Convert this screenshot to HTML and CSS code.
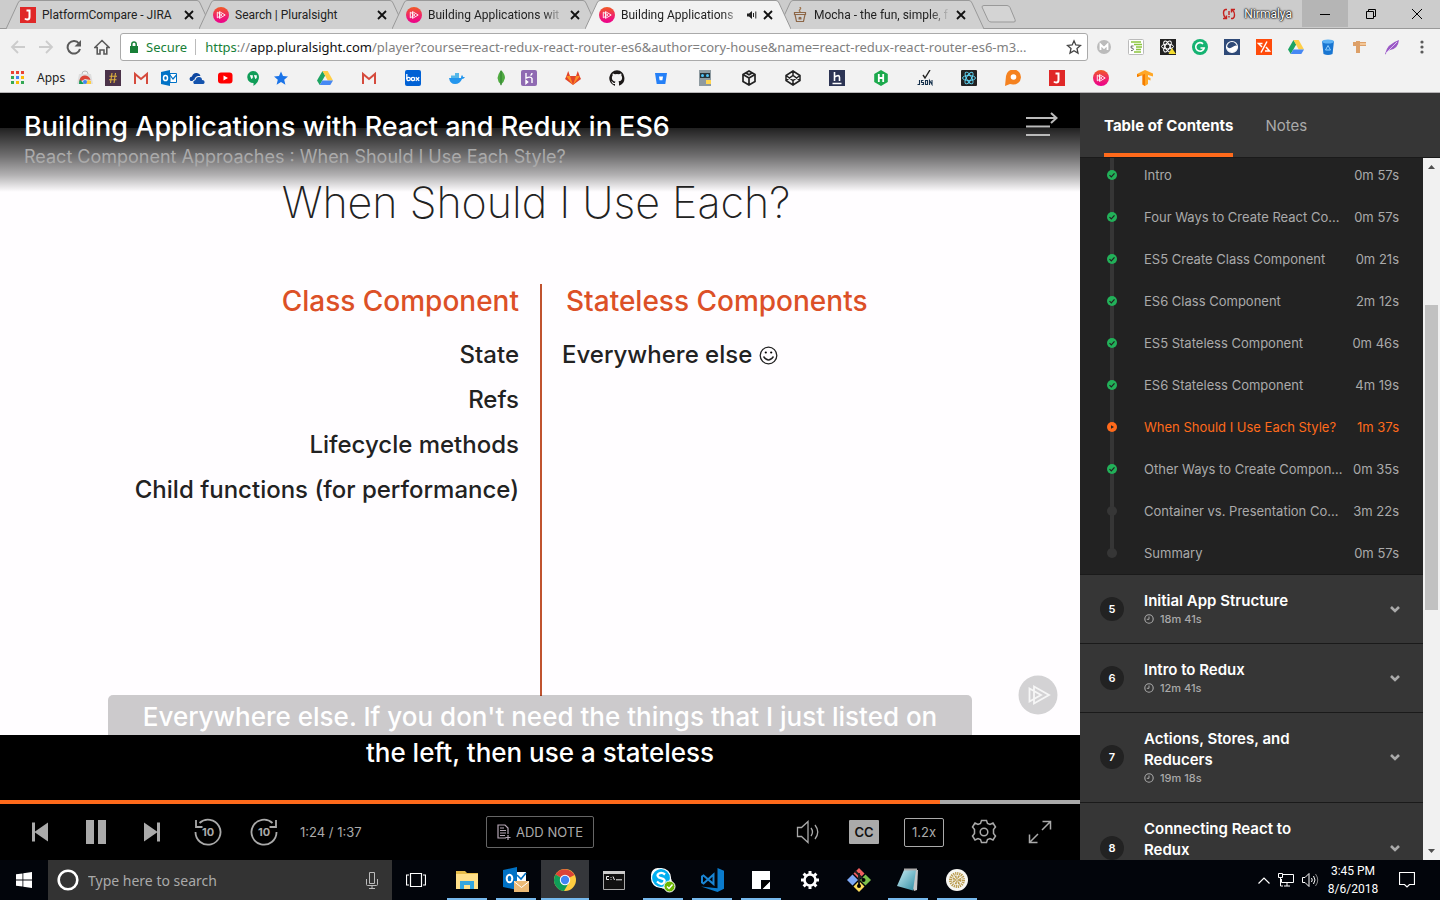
FILE: index.html
```html
<!DOCTYPE html>
<html lang="en">
<head>
<meta charset="utf-8">
<title>Building Applications with React and Redux in ES6</title>
<link rel="stylesheet" href="styles.css">
</head>
<body>
<svg class="defs" aria-hidden="true">
  <defs>
    <linearGradient id="pinkGrad" x1="0" y1="0" x2="0" y2="1"><stop offset="0" stop-color="#f15a24"/><stop offset=".55" stop-color="#f0246a"/><stop offset="1" stop-color="#ec008c"/></linearGradient>
    <linearGradient id="noteGrad" x1="0" y1="0" x2="1" y2="1"><stop offset="0" stop-color="#c9eef5"/><stop offset="1" stop-color="#2f8ca3"/></linearGradient>
  </defs>
  <symbol id="ps" viewBox="0 0 16 16"><circle cx="8" cy="8" r="8" fill="url(#pinkGrad)"/><path d="M6.5 4.6 12.2 8 6.500 11.400zM4.300 5.200 9 8l-4.700 2.800z" fill="none" stroke="#fff" stroke-width=".9"/></symbol>
  <symbol id="jira" viewBox="0 0 16 16"><path fill="#e02828" d="M0 0h16v16H0z"/><path d="M6.500 3.500h4M9.500 3.500v6.500q0 2.500-2.300 2.500-1.500 0-2.200-1" fill="none" stroke="#fff" stroke-width="2"/></symbol>
  <symbol id="x" viewBox="0 0 10 10"><path d="M1 1l8 8M9 1 1 9" stroke="#111" stroke-width="1.800"/></symbol>
  <symbol id="tabshape" viewBox="0 0 206 29" preserveAspectRatio="none"><path d="M0 29 12 3Q13 .5 15 .5H191Q193 .5 194 3L206 29" stroke="#999"/></symbol>
  <symbol id="gmail" viewBox="0 0 16 16"><path fill="#f3f3f3" d="M1 3h14v11H1z"/><path d="M2 14V4l6 5 6-5v10" fill="none" stroke="#d54b3d" stroke-width="2"/></symbol>
  <symbol id="drive" viewBox="0 0 16 16"><path fill="#1da462" d="M5.500 1 0 10.500 2.700 15 8.200 5.600z"/><path fill="#ffcf48" d="M5.500 1h5.200L16 10.500h-5.300z"/><path fill="#4688f4" d="M5.400 10.500H16L13.300 15H2.700z"/></symbol>
  <symbol id="check" viewBox="0 0 10 10"><circle cx="5" cy="5" r="5" fill="#22b159"/><path d="M2.500 5.200 4.300 7l3.200-3.600" fill="none" stroke="#222" stroke-width="1.200"/></symbol>
  <symbol id="playdot" viewBox="0 0 10 10"><circle cx="5" cy="5" r="5" fill="#ff6a1b"/><path d="M4 3.200 7 5 4 6.800z" fill="#222"/></symbol>
  <symbol id="todo" viewBox="0 0 10 10"><circle cx="5" cy="5" r="5" fill="#363636"/></symbol>
  <symbol id="clock" viewBox="0 0 10 10"><circle cx="5" cy="5" r="4.200" fill="none" stroke="#aaa" stroke-width="1.100"/><path d="M5 2.500V5.300H2.800" fill="none" stroke="#aaa"/></symbol>
  <symbol id="chev" viewBox="0 0 10 8"><path d="M1 2l4 4 4-4" fill="none" stroke="#aaa" stroke-width="2.600"/></symbol>
  <symbol id="outlook" viewBox="0 0 16 16"><path fill="#0072c6" d="M0 2 9 0v16l-9-2z"/><path fill="#fff" stroke="#0072c6" d="M9 3.500h6.500v9H9z"/><path d="M9 5l3 4 3.500-4" fill="none" stroke="#0072c6" stroke-width="1.200"/><ellipse cx="4.500" cy="8" rx="2" ry="2.600" fill="none" stroke="#fff" stroke-width="1.500"/></symbol>
</svg>

<header class="browser">
  <nav class="tabs" aria-label="Browser tabs">
    <a class="tab" href="#"><svg class="shape"><use href="#tabshape"/></svg><svg class="i16"><use href="#jira"/></svg><span class="label">PlatformCompare - JIRA</span><button aria-label="Close"><svg class="i10"><use href="#x"/></svg></button></a>
    <a class="tab" href="#"><svg class="shape"><use href="#tabshape"/></svg><svg class="i16"><use href="#ps"/></svg><span class="label">Search | Pluralsight</span><button aria-label="Close"><svg class="i10"><use href="#x"/></svg></button></a>
    <a class="tab" href="#"><svg class="shape"><use href="#tabshape"/></svg><svg class="i16"><use href="#ps"/></svg><span class="label fade">Building Applications wit</span><button aria-label="Close"><svg class="i10"><use href="#x"/></svg></button></a>
    <a class="tab active" href="#"><svg class="shape"><use href="#tabshape"/></svg><svg class="i16"><use href="#ps"/></svg><span class="label fade">Building Applications</span><svg class="i10" viewBox="0 0 10 10"><path d="M0 3.500h2L5 1v8L2 6.500H0z" fill="#222"/><path d="M6.500 3v4M8.800 1.500v7" stroke="#222"/></svg><button aria-label="Close"><svg class="i10"><use href="#x"/></svg></button></a>
    <a class="tab" href="#"><svg class="shape"><use href="#tabshape"/></svg><svg class="i16" viewBox="0 0 16 16"><path d="M3 7.500h10l-1.500 7h-7zM2.500 5.500h11v2h-11z" fill="none" stroke="#8d6748" stroke-width="1.200"/><path d="M6.500 12.500v-2q1.500-1.500 3 0v2z" fill="#8d6748"/><path d="M7.500 0q2 1 .5 2.500T8.500 5" fill="none" stroke="#a0764f" stroke-width="1.300"/></svg><span class="label fade">Mocha - the fun, simple, f</span><button aria-label="Close"><svg class="i10"><use href="#x"/></svg></button></a>
    <button class="newtab" aria-label="New tab"><svg width="36" height="18" viewBox="0 0 36 18"><path d="M1 2Q1 .5 3 .5h23q2 0 3 2l5 12q1 2.500-1 2.500H10q-2 0-3-2z" fill="#d4d4d4" stroke="#999"/></svg></button>
    <div class="window">
      <svg width="14" height="12" viewBox="0 0 14 12"><path d="M5 1.500H3.500Q1.500 2 1.500 5t2 5M9 10.500h1.500q2-.5 2-3.500t-2-5M1 10.500h3.500v-3M13 1.500H9.500v3" fill="none" stroke="#c5221f" stroke-width="1.400"/><path d="M7 3v4M7 8v1.500" stroke="#c5221f" stroke-width="1.400"/></svg>
      <span class="user">Nirmalya</span>
      <button class="min" aria-label="Minimize"><svg class="i10" viewBox="0 0 10 10"><path d="M0 5.500h10" stroke="#000"/></svg></button>
      <button aria-label="Restore"><svg class="i10" viewBox="0 0 10 10"><path d="M.5 2.500h7v7h-7zM2.500 2.500v-2h7v7h-2" fill="none" stroke="#000"/></svg></button>
      <button aria-label="Close window"><svg class="i10" viewBox="0 0 10 10"><path d="M0 0l10 10M10 0 0 10" stroke="#000"/></svg></button>
    </div>
  </nav>

  <div class="toolbar">
    <button aria-label="Back"><svg class="i16" viewBox="0 0 16 16"><path d="M15 8H2M8 2 2 8l6 6" fill="none" stroke="#ccc" stroke-width="1.800"/></svg></button>
    <button aria-label="Forward"><svg class="i16" viewBox="0 0 16 16"><path d="M1 8h13M8 2l6 6-6 6" fill="none" stroke="#ccc" stroke-width="1.800"/></svg></button>
    <button aria-label="Reload"><svg class="i16" viewBox="0 0 16 16"><path d="M13 4.500A6.300 6.300 0 1 0 14 10" fill="none" stroke="#5a5a5a" stroke-width="2"/><path d="M15 1v6.500H8.500z" fill="#5a5a5a"/></svg></button>
    <button aria-label="Home"><svg class="i16" viewBox="0 0 16 16"><path d="M.8 8.500 8 1.500l7.200 7h-2.400V15H10v-4H6v4H3.200V8.500z" fill="none" stroke="#5a5a5a" stroke-width="1.600"/></svg></button>
    <div class="omnibox">
      <svg width="8" height="12" viewBox="0 0 8 12"><path d="M0 5h8v7H0z" fill="#188038"/><path d="M1.800 5V3Q2 1 4 1t2.200 2v2" fill="none" stroke="#188038" stroke-width="1.500"/></svg>
      <span class="secure">Secure</span>
      <div class="url" role="textbox" aria-label="Address"><span class="secure">https</span>://<b>app.pluralsight.com</b>/player?course=react-redux-react-router-es6&amp;author=cory-house&amp;name=react-redux-react-router-es6-m3...</div>
      <button aria-label="Bookmark"><svg class="i16" viewBox="0 0 16 16"><path d="M8 1.800 9.800 6l4.700.4-3.500 3.100 1 4.600L8 11.700l-4 2.400 1-4.600L1.500 6.400 6.200 6z" fill="none" stroke="#444" stroke-width="1.300"/></svg></button>
    </div>
    <div class="extensions">
      <svg class="i16" viewBox="0 0 16 16"><circle cx="8" cy="8" r="7" fill="#bbb"/><path d="M4.500 11V5.500L8 9l3.500-3.500V11" fill="none" stroke="#fff" stroke-width="1.800"/></svg>
      <svg class="i16" viewBox="0 0 16 16"><rect x=".5" y=".5" width="15" height="15" rx="1" fill="#fff" stroke="#bbb"/><path d="M3 3h10M6 5.500h8M8 8h6M8 10.500h5M6 13h7" stroke="#8cc63f" stroke-width="1.400"/><path d="M5.500 7H3.200v2q2.500 0 2.300 1.300T3 11.700" fill="none" stroke="#666"/></svg>
      <svg class="i16" viewBox="0 0 16 16"><path fill="#222" d="M0 0h16v16H0z"/><g fill="none" stroke="#fff"><ellipse cx="7.500" cy="7.500" rx="6" ry="2.400"/><ellipse cx="7.500" cy="7.500" rx="6" ry="2.400" transform="rotate(60 7.500 7.500)"/><ellipse cx="7.500" cy="7.500" rx="6" ry="2.400" transform="rotate(120 7.500 7.500)"/></g><path d="M12 9l4 6H8.500z" fill="#f4dd2f"/></svg>
      <svg class="i16" viewBox="0 0 16 16"><circle cx="8" cy="8" r="8" fill="#15b372"/><path d="M11 4.800A4.300 4.300 0 1 0 12.200 9H8.500" fill="none" stroke="#fff" stroke-width="1.600"/></svg>
      <svg class="i16" viewBox="0 0 16 16"><path fill="#2f4a78" d="M0 0h16v16H0z"/><circle cx="8" cy="8" r="5.500" fill="none" stroke="#fff" stroke-width="1.200"/><path d="M2.800 7.500q2.500 3 5.700.5T13.200 7q.3 6-5.200 6.200Q3 13 2.800 7.500" fill="#fff"/></svg>
      <svg class="i16" viewBox="0 0 16 16"><path fill="#ff4b0b" d="M0 0h16v16H0z"/><path d="M6.500 4.500H2.500L6 8M11 2.500 5 13.500M10 8l3.500 4H9" fill="none" stroke="#fff" stroke-width="1.500"/></svg>
      <svg class="i16"><use href="#drive"/></svg>
      <svg class="i16" viewBox="0 0 16 16"><path fill="#1976d2" d="M2 2h12l-1.500 13q-4.500 2-9 0z"/><ellipse cx="8" cy="2.500" rx="6" ry="2" fill="#5db2f5"/><path d="M5.500 11 8 6.500l2.500 4.500z" fill="none" stroke="#8fd0ff"/></svg>
      <svg class="i16" viewBox="0 0 16 16"><path fill="#dda068" d="M4 2h4v12H4zM1 3h13v4H1z"/><path d="M8 4h6v2H8z" fill="#f3c798"/></svg>
      <svg class="i16" viewBox="0 0 16 16"><path fill="#9b59c6" d="M1 15Q3 5 15 1q-1 9-9 10l-3 1.500-1.500 3z"/><path d="M2 14 13 3" stroke="#d9bdf0"/></svg>
      <svg class="dots" width="4" height="16" viewBox="0 0 4 16"><g fill="#5a5a5a"><circle cx="2" cy="3" r="1.600"/><circle cx="2" cy="8" r="1.600"/><circle cx="2" cy="13" r="1.600"/></g></svg>
    </div>
  </div>

  <nav class="bookmarks" aria-label="Bookmarks">
    <a class="apps" href="#"><svg width="13" height="13" viewBox="0 0 13 13"><path fill="#ea4335" d="M0 0h3v3H0zM5 0h3v3H5zM10 0h3v3h-3z"/><path fill="#34a853" d="M0 5h3v3H0zM10 10h3v3h-3z"/><path fill="#4285f4" d="M5 5h3v3H5z"/><path fill="#fbbc05" d="M10 5h3v3h-3zM5 10h3v3H5z"/><path fill="#34a853" d="M0 10h3v3H0z"/></svg><span>Apps</span></a>
    <div class="tight">
      <svg class="i16" viewBox="0 0 16 16"><path fill="#dedede" d="M2 4h12l2 10H0z"/><path d="M5 4q0-3 3-3t3 3" fill="none" stroke="#bbb"/><path fill="#db4437" d="M2.500 12a5.500 5.500 0 0 1 11-2L8 9z"/><path fill="#0f9d58" d="M2 14q0-3 1-4.500L7 14z"/><path fill="#ffcd40" d="M14 14H8l3-4 3 1z"/><circle cx="8" cy="12" r="2" fill="#4285f4"/></svg>
      <svg class="i16" viewBox="0 0 16 16"><path fill="#4b3349" d="M0 0h16v16H0z"/><path d="M7 3 5.500 13M10.500 3 9 13M4.500 6.200h7.500M4 9.800h7.500" stroke="#dcb13e" stroke-width="1.100"/></svg>
      <svg class="i16"><use href="#gmail"/></svg>
      <svg class="i16"><use href="#outlook"/></svg>
      <svg class="i16" viewBox="0 0 16 16"><path fill="#0d47a1" d="M1.500 11q-2.500-3.500 1.500-4.500Q4 2.500 8 3q3 .5 3.500 3H9q-3 .5-3.500 3.500Q4 9.500 3.500 11z"/><path fill="#1453ad" d="M5 14q-2-3 1.500-4Q7 7 10 7t3 3q3 0 2.500 3l-1 1z"/></svg>
      <svg class="i16" viewBox="0 0 16 16"><rect x="1" y="2.500" width="14.500" height="11" rx="3" fill="#f00"/><path d="M6.500 5.500 11 8l-4.500 2.500z" fill="#fff"/></svg>
      <svg class="i16" viewBox="0 0 16 16"><path d="M8 1a6 6 0 0 1 6 6q0 5-5.500 9v-3A6 6 0 1 1 8 1z" fill="#109d58"/><path d="M5 5.500h2.500v2.300L6.300 9M9 5.500h2.500v2.300L10.300 9" fill="#fff" stroke="#fff" stroke-width=".6"/></svg>
      <svg class="i16" viewBox="0 0 16 16"><path d="M8 1.500l2 4.600 5 .4-3.800 3.300 1.200 4.900L8 12.100l-4.400 2.600 1.200-4.900L1 6.500l5-.4z" fill="#1a73e8"/></svg>
    </div>
    <div class="wide">
      <svg class="i16"><use href="#drive"/></svg>
      <svg class="i16"><use href="#gmail"/></svg>
      <svg class="i16" viewBox="0 0 16 16"><rect width="16" height="16" rx="2" fill="#0061d5"/><g fill="none" stroke="#fff" stroke-width="1.300"><path d="M1.800 4v5"/><circle cx="3.600" cy="9" r="1.700"/><circle cx="8" cy="9" r="1.700"/><path d="M10.800 7.200l3.400 3.700M14.200 7.200l-3.400 3.700"/></g></svg>
      <svg class="i16" viewBox="0 0 16 16"><path d="M0 8h12q0-2 1-3 1 1 1 2h2q-1 2-3 2-2 5-7 5T0 8z" fill="#2496ed"/><path d="M2 5.500h8V8H2zM6 3h4v2.500H6z" fill="#55b7e8"/></svg>
      <div class="tight">
        <svg class="i16" viewBox="0 0 16 16"><path d="M8 0q4 4 4 8-1 4-3.500 6L8 16l-.5-2Q5 12 4.500 8 5 4 8 0z" fill="#4faa41"/><path d="M8 1v14" stroke="#2f7d31"/></svg>
        <svg class="i16" viewBox="0 0 16 16"><rect width="16" height="16" rx="2" fill="#8f6ab2"/><path d="M5 3v5q5-2 6 .5V13M5 10.500v3l1.700-1.500zM11 3q0 1.500-1.500 2.500" fill="none" stroke="#fff" stroke-width="1.400"/></svg>
      </div>
      <svg class="i16" viewBox="0 0 16 16"><path fill="#e24329" d="M8 15 0 9l1-2L3.200 1 5 6h6l1.800-5L15 7l1 2z"/><path fill="#fc8c26" d="M8 15 1 6h4zM8 15l7-9h-4z"/></svg>
      <svg class="i16" viewBox="0 0 16 16"><path fill="#1b1817" d="M8 .3a8 8 0 0 0-2.500 15.500c.4.100.5-.200.5-.400v-1.500c-2.200.500-2.700-1-2.700-1-.4-.900-.9-1.200-.9-1.200-.7-.5.100-.5.100-.5.800.1 1.200.8 1.200.8.700 1.300 1.900.9 2.300.7.100-.5.300-.9.500-1.100-1.800-.2-3.600-.9-3.600-4 0-.9.300-1.600.8-2.100-.1-.2-.4-1 .1-2.100 0 0 .7-.2 2.200.8a7.600 7.600 0 0 1 4 0c1.500-1 2.200-.8 2.200-.8.400 1.100.2 1.900.1 2.100.5.600.8 1.300.8 2.100 0 3.100-1.900 3.700-3.700 3.900.3.300.6.800.6 1.500v2.200c0 .2.100.5.600.4A8 8 0 0 0 8 .3z"/></svg>
      <svg class="i16" viewBox="0 0 16 16"><path fill="#2580f7" d="M2 3h12l-1.700 11H3.700z"/><path d="M6 6.500h4l-.6 3.800H6.600z" fill="#fff"/></svg>
      <svg class="i16" viewBox="0 0 16 16"><path fill="#8e9aa0" d="M2 0h12v16H2z"/><path fill="#263238" d="M3 3h10v5H3z"/><circle cx="5.500" cy="5.500" r="1.500" fill="#4fc3f7"/><circle cx="10.500" cy="5.500" r="1.500" fill="#4fc3f7"/><path d="M9 10h5v4H9z" fill="#ffd54f"/></svg>
      <svg class="i16" viewBox="0 0 16 16"><g fill="none" stroke="#222" stroke-width="1.700"><path d="M8 1l6 3.500v7L8 15l-6-3.500v-7zM8 8v7M8 8 2 4.500M8 8l6-3.500M5 3l3 1.700L11 3"/></g></svg>
      <svg class="i16" viewBox="0 0 16 16"><path d="M8 1l7 4.500v5L8 15l-7-4.500v-5zM8 1v4.500M8 10.500V15M1 5.500l7 5 7-5M1 10.500l7-5 7 5" fill="none" stroke="#222" stroke-width="1.500"/></svg>
      <svg class="i16" viewBox="0 0 16 16"><path fill="#2c3454" d="M0 0h16v16H0z"/><path d="M5.500 2v9M5.500 7q5-3 5 .5V11M3.500 13.500h9" fill="none" stroke="#fff" stroke-width="1.600"/></svg>
      <svg class="i16" viewBox="0 0 16 16"><path fill="#1ba94c" d="M8 0l6.800 4v8L8 16l-6.800-4V4z"/><path d="M5.800 4v8M10.200 4v8M5.800 8h4.400" stroke="#fff" stroke-width="1.800"/></svg>
      <svg class="i16" viewBox="0 0 16 16"><path d="M6 5l2 3 5-8" fill="none" stroke="#222" stroke-width="1.400"/><g fill="none" stroke="#17324d" stroke-width="1.100"><path d="M2.500 10v4.500H.5M6.500 10.500h-2v2h2v2h-2M8.500 10.500h2v4h-2zM12.500 15v-4.500l2.500 4V10"/></g></svg>
      <svg class="i16" viewBox="0 0 16 16"><rect width="16" height="16" rx="1" fill="#222"/><g fill="none" stroke="#61dafb" stroke-width=".9"><ellipse cx="8" cy="8" rx="6.500" ry="2.500"/><ellipse cx="8" cy="8" rx="6.500" ry="2.500" transform="rotate(60 8 8)"/><ellipse cx="8" cy="8" rx="6.500" ry="2.500" transform="rotate(120 8 8)"/></g></svg>
      <svg class="i16" viewBox="0 0 16 16"><path d="M0 16 1 6A7.500 7.500 0 1 1 8 14.500l-3-.5z" fill="#f58220"/><circle cx="8.500" cy="7" r="2.800" fill="#fff"/></svg>
      <svg class="i16"><use href="#jira"/></svg>
      <svg class="i16"><use href="#ps"/></svg>
      <svg class="i16" viewBox="0 0 16 16"><path fill="#ffa726" d="M0 4 8 0l8 3.500v3L11 5v2l2.500 1v2.500L11 9.500V14l-3 2-2.500-1.500V5L0 7z"/><path fill="#f57c00" d="M8 4v12l-2.500-1.500V5L0 7V4l3 1.500z"/></svg>
    </div>
  </nav>
</header>

<div class="app">
  <main class="player">
    <div class="stage">
      <section class="slide">
        <h2>When Should I Use Each?</h2>
        <div class="compare">
          <div class="col left"><h3>Class Component</h3><ul><li>State</li><li>Refs</li><li>Lifecycle methods</li><li>Child functions (for performance)</li></ul></div>
          <div class="col right"><h3>Stateless Components</h3><ul><li>Everywhere else <svg width="19" height="19" viewBox="0 0 19 19"><circle cx="9.500" cy="9.500" r="8.300" fill="none" stroke="#222" stroke-width="1.300"/><circle cx="6.800" cy="6.500" r="1.100"/><circle cx="12.200" cy="6.500" r="1.100"/><path d="M4.500 10.500q5 7 10 0" fill="none" stroke="#222" stroke-width="1.300"/></svg></li></ul></div>
        </div>
      </section>
      <div class="head">
        <div><h1>Building Applications with React and Redux in ES6</h1><p>React Component Approaches : When Should I Use Each Style?</p></div>
        <button aria-label="Hide menu"><svg width="34" height="26" viewBox="0 0 34 26"><path d="M2 7h30M2 15.500h24M2 24h24M27 2l5.500 5L27 12" fill="none" stroke="#bbb" stroke-width="2"/></svg></button>
      </div>
      <svg class="watermark" viewBox="0 0 40 40"><circle cx="20" cy="20" r="19.500" fill="#d3d2d4"/><path d="M16 11.500 31 20l-15 8.500zM11.500 13.500 23 20l-11.500 6.500z" fill="none" stroke="#f6f6f6" stroke-width="1.800"/></svg>
      <p class="caption">Everywhere else. If you don't need the things that I just listed on<br>the left, then use a stateless</p>
    </div>
    <div class="progress" role="progressbar" aria-valuenow="87"><div style="width:87%"></div></div>
    <div class="controls">
      <div class="group">
        <button aria-label="Previous"><svg width="16" height="20" viewBox="0 0 16 20"><path d="M0 .5h3v9l13-9v19l-13-9v9H0z" fill="#aaa"/></svg></button>
        <button aria-label="Pause"><svg width="20" height="24" viewBox="0 0 20 24"><path d="M0 0h8v24H0zM12 0h8v24h-8z" fill="#aaa"/></svg></button>
        <button aria-label="Next"><svg width="16" height="20" viewBox="0 0 16 20"><path d="M16 .5h-3v9L0 .5v19l13-9v9h3z" fill="#aaa"/></svg></button>
        <button class="skip" aria-label="Back 10 seconds"><svg width="28" height="28" viewBox="0 0 28 28"><path d="M1.500 14a12.500 12.500 0 1 0 4-9M2 2v7h6.500" fill="none" stroke="#aaa" stroke-width="1.800"/></svg><span>10</span></button>
        <button class="skip" aria-label="Forward 10 seconds"><svg width="28" height="28" viewBox="0 0 28 28"><path d="M26.500 14a12.500 12.500 0 1 1-4-9M26 2v7h-6.500" fill="none" stroke="#aaa" stroke-width="1.800"/></svg><span>10</span></button>
        <span class="time">1:24 / 1:37</span>
      </div>
      <button class="note"><svg width="14" height="16" viewBox="0 0 14 16"><path d="M11 10V4L8 1H1v13h8M3 4h4M3 6.500h6M3 9h6M3 11.500h5M11 11v5M8.500 13.500h5" fill="none" stroke="#b5a6b5" stroke-width="1.200"/></svg>ADD NOTE</button>
      <div class="group end">
        <button aria-label="Volume"><svg width="24" height="24" viewBox="0 0 24 24"><path d="M1.500 7.500h4l6.500-6v21l-6.500-6h-4zM15 8q3 4 0 8M19 5q5.500 7 0 14" fill="none" stroke="#aaa" stroke-width="1.300"/></svg></button>
        <button class="cc">CC</button>
        <button class="speed">1.2x</button>
        <button aria-label="Settings"><svg width="26" height="26" viewBox="0 0 26 26"><path d="M10.500 1.500h5l1 3 2.500 1 3-1.500 2.500 4-2 2.500v4l2 2.500-2.500 4-3-1.500-2.500 1-1 3h-5l-1-3-2.500-1-3 1.500-2.500-4 2-2.500v-4l-2-2.500 2.500-4 3 1.500 2.500-1z" fill="none" stroke="#aaa" stroke-width="1.500"/><circle cx="13" cy="13" r="3.800" fill="none" stroke="#aaa" stroke-width="1.500"/></svg></button>
        <button aria-label="Full screen"><svg width="24" height="24" viewBox="0 0 24 24"><path d="M14 10l8.500-8.500M14.500 1.500h8v8M10 14l-8.500 8.500M1.500 14.500v8h8" fill="none" stroke="#aaa" stroke-width="1.500"/></svg></button>
      </div>
    </div>
  </main>

  <aside class="side">
    <div class="sidetabs"><button class="on">Table of Contents</button><button>Notes</button></div>
    <div class="scroll">
      <div class="toc">
        <ol class="clips">
          <li><svg><use href="#check"/></svg><a href="#">Intro</a><span>0m 57s</span></li>
          <li><svg><use href="#check"/></svg><a href="#">Four Ways to Create React Co...</a><span>0m 57s</span></li>
          <li><svg><use href="#check"/></svg><a href="#">ES5 Create Class Component</a><span>0m 21s</span></li>
          <li><svg><use href="#check"/></svg><a href="#">ES6 Class Component</a><span>2m 12s</span></li>
          <li><svg><use href="#check"/></svg><a href="#">ES5 Stateless Component</a><span>0m 46s</span></li>
          <li><svg><use href="#check"/></svg><a href="#">ES6 Stateless Component</a><span>4m 19s</span></li>
          <li class="current"><svg><use href="#playdot"/></svg><a href="#">When Should I Use Each Style?</a><span>1m 37s</span></li>
          <li><svg><use href="#check"/></svg><a href="#">Other Ways to Create Compon...</a><span>0m 35s</span></li>
          <li><svg><use href="#todo"/></svg><a href="#">Container vs. Presentation Co...</a><span>3m 22s</span></li>
          <li><svg><use href="#todo"/></svg><a href="#">Summary</a><span>0m 57s</span></li>
        </ol>
        <section class="module"><span class="num">5</span><div><h4>Initial App Structure</h4><p><svg><use href="#clock"/></svg>18m 41s</p></div><button aria-label="Expand"><svg><use href="#chev"/></svg></button></section>
        <section class="module"><span class="num">6</span><div><h4>Intro to Redux</h4><p><svg><use href="#clock"/></svg>12m 41s</p></div><button aria-label="Expand"><svg><use href="#chev"/></svg></button></section>
        <section class="module"><span class="num">7</span><div><h4>Actions, Stores, and Reducers</h4><p><svg><use href="#clock"/></svg>19m 18s</p></div><button aria-label="Expand"><svg><use href="#chev"/></svg></button></section>
        <section class="module last"><span class="num">8</span><div><h4>Connecting React to Redux</h4></div><button aria-label="Expand"><svg><use href="#chev"/></svg></button></section>
      </div>
      <div class="bar"><svg width="7" height="4" viewBox="0 0 7 4"><path d="M0 4 3.500 0 7 4z" fill="#505050"/></svg><div class="track"><div class="thumb"></div></div><svg width="7" height="4" viewBox="0 0 7 4"><path d="M0 0 3.500 4 7 0z" fill="#505050"/></svg></div>
    </div>
  </aside>
</div>

<footer class="taskbar">
  <button class="cell" aria-label="Start"><svg width="16" height="16" viewBox="0 0 16 16"><path d="M0 2.300 6.500 1.400v6.100H0zM7.300 1.300 16 0v7.500H7.300zM0 8.400h6.500v6.200L0 13.700zM7.300 8.400H16V16l-8.700-1.300z" fill="#fff"/></svg></button>
  <label class="search"><svg width="22" height="22" viewBox="0 0 22 22"><circle cx="11" cy="11" r="9.300" fill="none" stroke="#fff" stroke-width="2.600"/></svg><input type="text" placeholder="Type here to search" aria-label="Search"><svg width="12" height="17" viewBox="0 0 12 17"><path d="M3.500.5h5v11h-5zM.5 7v5.500q0 1 1 1h9q1 0 1-1V7M6 13.500v3M3 16.500h6" fill="none" stroke="#bbb"/></svg></label>
  <button class="cell" aria-label="Task view"><svg width="20" height="14" viewBox="0 0 20 14"><path d="M4.500.5h11v13h-11zM3 2H.5v10H3M17 2h2.500v10H17" fill="none" stroke="#fff" stroke-width="1.200"/></svg></button>
  <div class="pinned">
    <button class="cell run" aria-label="File Explorer"><svg width="24" height="24" viewBox="0 0 24 24"><path d="M1 3h9l2 2h11v16H1z" fill="#e7bd4a"/><path d="M1 6h22v15H1z" fill="#ffe08a"/><path d="M5 13h14v8h-4v-4H9v4H5z" fill="#35a6df"/></svg></button>
    <button class="cell run" aria-label="Outlook"><svg width="26" height="26" viewBox="0 0 26 26"><path fill="#0072c6" d="M0 3 14 0v23L0 20z"/><path fill="#fff" d="M14 5h9v12h-9z"/><path d="M14 8l4 4 5-6" fill="none" stroke="#0072c6" stroke-width="1.600"/><ellipse cx="6.500" cy="11.500" rx="2.800" ry="3.800" fill="none" stroke="#fff" stroke-width="2"/><path fill="#ecba76" d="M11 14h15v11H11z"/><path d="M11 14.500l7.500 6 7.500-6" fill="none" stroke="#fff"/></svg></button>
    <button class="cell run active" aria-label="Chrome"><svg width="22" height="22" viewBox="0 0 22 22"><circle cx="11" cy="11" r="11" fill="#ffcd40"/><path d="M11 11 1.500 5.500A11 11 0 0 1 20.500 6z" fill="#db4437"/><path d="M1.500 5.500A11 11 0 0 0 10 22l5-8.500-4-2.500z" fill="#0f9d58"/><circle cx="11" cy="11" r="5.200" fill="#fff"/><circle cx="11" cy="11" r="4.200" fill="#4285f4"/></svg></button>
    <button class="cell" aria-label="Command Prompt"><svg width="22" height="19" viewBox="0 0 22 19"><path d="M.5.500h21v18H.500z" fill="#111" stroke="#aaa"/><path d="M0 0h22v3H0z" fill="#ccc"/><path d="M6 5.500H3.500v3H6M8 6v.8M8 8v.8M10 5.500l1.500 3.500M13 8.800h6" fill="none" stroke="#eee"/></svg></button>
    <button class="cell run" aria-label="Skype"><svg width="26" height="26" viewBox="0 0 26 26"><circle cx="8" cy="8" r="7" fill="#fff"/><circle cx="15" cy="15" r="7" fill="#fff"/><circle cx="11" cy="11" r="9.500" fill="#00aff0" stroke="#fff" stroke-width="1.200"/><path d="M15 7.500Q12 5 9 6.500T9 10.500l4 1.300Q16 13.500 13.500 16T7 14.500" fill="none" stroke="#fff" stroke-width="2.300"/><circle cx="19.500" cy="19.500" r="5.500" fill="#6bb700" stroke="#fff"/><path d="M17 19.500l2 2 3.500-4" fill="none" stroke="#fff" stroke-width="1.400"/></svg></button>
    <button class="cell run" aria-label="Visual Studio Code"><svg width="24" height="24" viewBox="0 0 24 24"><path d="M17.500 0 24 2.800v18L17.500 24 1 18.500l16.500 1.800z" fill="#0a7bcc"/><path d="M13.500 6.500 3.500 15.500 2 14.500v-6l1.500-1 10 8.500z" fill="none" stroke="#1a85d4" stroke-width="2"/></svg></button>
    <button class="cell run" aria-label="Sticky Notes"><svg width="18" height="18" viewBox="0 0 18 18"><path d="M0 0h18v9H9v9H0zM10.500 18l7.500-7.500V18z" fill="#fff"/><path d="M10 10h8l-8 8z" fill="#000"/></svg></button>
    <button class="cell" aria-label="Settings"><svg width="20" height="20" viewBox="0 0 20 20"><circle cx="10" cy="10" r="5.500" fill="none" stroke="#fff" stroke-width="2.600"/><path d="M10 1v3M10 16v3M1 10h3M16 10h3M3.600 3.600l2.200 2.200M14.200 14.200l2.200 2.200M16.400 3.600l-2.200 2.200M5.800 14.200l-2.200 2.200" stroke="#fff" stroke-width="3"/></svg></button>
    <button class="cell" aria-label="Git Bash"><svg width="24" height="24" viewBox="0 0 24 24"><path d="M12 0l5.500 5.500L12 11 6.500 5.500z" fill="#f05f5f"/><path d="M5.500 6.500 11 12l-5.500 5.500L0 12z" fill="#7ea9f5"/><path d="M18.500 6.500 24 12l-5.500 5.500L13 12z" fill="#7cc04b"/><path d="M12 13l5.500 5.500L12 24l-5.500-5.500z" fill="#fbdc5c"/><path d="M12 5v13M8 3l8 8" stroke="#222" stroke-width="2"/><circle cx="12" cy="18" r="2"/><circle cx="16.500" cy="12" r="2"/></svg></button>
    <button class="cell run" aria-label="Notepad"><svg width="24" height="24" viewBox="0 0 24 24"><path d="M9 2h13l-1 20-3 1z" fill="#c8c8c8"/><path d="M8 2h12l-3 20.500L1 18z" fill="url(#noteGrad)"/><path d="M8 1.500h13" stroke="#aaa" stroke-width="2"/></svg></button>
    <button class="cell run" aria-label="Fiddler"><svg width="22" height="22" viewBox="0 0 22 22"><circle cx="11" cy="11" r="11" fill="#f6f6f2"/><circle cx="11" cy="11" r="6.500" fill="none" stroke="#b99a4c" stroke-width="3" stroke-dasharray="1.200 .8"/><circle cx="11" cy="11" r="2.500" fill="none" stroke="#b99a4c" stroke-width="4" stroke-dasharray="1.200 .8"/></svg></button>
  </div>
  <div class="tray">
    <svg width="12" height="7" viewBox="0 0 12 7"><path d="M.5 6.500 6 1l5.500 5.500" fill="none" stroke="#fff" stroke-width="1.200"/></svg>
    <svg width="16" height="14" viewBox="0 0 16 14"><path d="M5 1.500h10.500v8H3.500V6M6 13h6M9 9.500V13M.5.500h4v4h-4zM2.500 4.500V13H5" fill="none" stroke="#fff"/></svg>
    <svg width="17" height="14" viewBox="0 0 17 14"><path d="M.5 4.500H3l4-4v13l-4-4H.5zM9.500 5q1.500 2 0 4M11.500 3q3 4 0 8" fill="none" stroke="#fff"/><path d="M13.500 1q4.500 6 0 12" fill="none" stroke="#888"/></svg>
    <div class="clock"><span>3:45 PM</span><span>8/6/2018</span></div>
    <svg width="16" height="16" viewBox="0 0 16 16"><path d="M.5.500h15v12h-5L8 15l-2.500-2.500h-5z" fill="none" stroke="#fff" stroke-width="1.200"/></svg>
  </div>
</footer>
</body>
</html>
```

FILE: styles.css
```css
* { box-sizing: border-box; }
body { margin: 0; height: 100vh; display: flex; flex-direction: column; overflow: hidden; background: #000; font-family: Inter, "Noto Sans", sans-serif; }
h1, h2, h3, h4, p, ul, ol { margin: 0; padding: 0; list-style: none; }
button { border: 0; padding: 0; background: none; font: inherit; color: inherit; display: flex; align-items: center; justify-content: center; }
a { color: inherit; text-decoration: none; }
svg { display: block; flex: none; }
.defs { position: absolute; width: 0; height: 0; }
.i16 { width: 16px; height: 16px; }
.i10 { width: 10px; height: 10px; }

/* browser window */
.browser { flex: none; background: #f2f2f2; border-bottom: 1px solid #b6b4b6; font-family: "Noto Sans", sans-serif; font-size: 12px; color: #222; }
.tabs { display: flex; height: 29px; padding-left: 6px; background: #ccc; border-bottom: 1px solid #999; }
.tab { position: relative; display: flex; align-items: center; gap: 6px; width: 206px; height: 29px; margin-right: -13px; padding: 0 18px 0 14px; font-family: Roboto, "Noto Sans", sans-serif; }
.tab > * { position: relative; }
.tab .shape { position: absolute; inset: 0; width: 100%; height: 29px; fill: #d0d0d0; }
.tab.active { z-index: 1; }
.tab.active .shape { fill: #f2f2f2; }
.label { flex: 1; overflow: hidden; white-space: nowrap; }
.fade { mask-image: linear-gradient(to right, #000 85%, transparent); }
.newtab { margin-left: 10px; }
.window { display: flex; align-items: center; margin-left: auto; height: 27px; }
.window button { width: 46px; height: 27px; }
.window .min { background: #b5b5b5; }
.user { margin: 0 10px 0 8px; font-family: Roboto, "Noto Sans", sans-serif; color: #fff; text-shadow: 0 0 2px #000, 0 0 2px #000, 0 0 1px #000; }
.toolbar { display: flex; align-items: center; height: 36px; padding: 0 16px 0 10px; gap: 12px; }
.omnibox { flex: 1; display: flex; align-items: center; gap: 8px; height: 28px; min-width: 0; margin-left: -2px; padding: 0 5px 0 9px; border: 1px solid #aaa; border-radius: 3px; background: #fff; color: #808080; }
.secure { color: #188038; font-size: 13px; }
.url { flex: 1; min-width: 0; padding-left: 9px; border-left: 1px solid #bbb; line-height: 16px; white-space: nowrap; font-size: 13px; }
.url b { font-weight: 400; color: #111; }
.extensions { display: flex; align-items: center; gap: 16px; margin-left: -4px; }
.dots { margin-left: 4px; }
.bookmarks { display: flex; align-items: center; height: 27px; padding: 0 0 2px 11px; }
.apps, .tight { display: flex; align-items: center; gap: 12px; }
.apps { margin-right: 12px; gap: 13px; }
.wide { display: flex; align-items: center; gap: 28px; margin-left: 28px; }

/* player */
.app { flex: 1; min-height: 0; display: flex; }
.player { flex: 3; min-width: 0; display: flex; flex-direction: column; background: #000; }
.stage { position: relative; flex: 1; padding-top: 35px; }
.slide { height: 607px; padding-top: 47px; background: #fffdff; color: #222; text-align: center; }
.slide h2 { height: 54px; line-height: 54px; padding-right: 8px; font-size: 43px; font-weight: 200; }
.compare { display: grid; grid-template-columns: 1fr 1fr; height: 412px; margin-top: 55px; }
.compare h3 { line-height: 34px; font-size: 28px; font-weight: 500; color: #dc5027; }
.compare ul { padding-top: 14px; }
.compare li { height: 45px; line-height: 45px; font-size: 24px; font-weight: 500; }
.left { padding-right: 21px; text-align: right; }
.right { padding-left: 20px; text-align: left; border-left: 2px solid #c0532f; }
.right h3 { padding-left: 4px; }
.right svg { display: inline-block; vertical-align: -2px; }
.head { position: absolute; top: 0; left: 0; right: 0; height: 99px; padding: 18px 22px 0 24px; display: flex; justify-content: space-between; align-items: flex-start; background: linear-gradient(#000, rgba(0,0,0,.87) 35px, rgba(0,0,0,.56) 63px, rgba(0,0,0,.3) 82px, transparent); color: #fff; }
.head h1 { line-height: 32px; font-size: 27px; font-weight: 500; }
.head p { line-height: 28px; font-size: 18px; font-weight: 400; color: #aaa; }
.watermark { position: absolute; right: 22px; top: 582px; width: 40px; height: 40px; }
.caption { position: absolute; left: 10%; right: 10%; top: 602px; padding: 4px 0; border-radius: 5px; background: rgba(0,0,0,.2); color: #fff; text-align: center; line-height: 36px; font-size: 26px; font-weight: 500; }
.progress { height: 4px; background: #aaa; }
.progress div { height: 4px; background: #ff6a1b; }
.controls { display: grid; grid-template-columns: 1fr auto 1fr; align-items: center; height: 56px; padding: 0 12px; color: #aaa; font-size: 13px; }
.group { display: flex; align-items: center; }
.group button { width: 56px; height: 40px; }
.end { justify-content: flex-end; }
.skip { position: relative; }
.skip span { position: absolute; font-size: 11px; font-weight: 700; }
.time { margin-left: 8px; }
.note { width: 108px; height: 32px; gap: 5px; border: 1px solid #666; border-radius: 2px; }
.group .cc { width: 30px; height: 24px; margin: 0 25px 0 13px; background: #aaa; color: #111; font-weight: 600; border-radius: 1px; }
.group .speed { width: 40px; height: 29px; margin-right: 12px; border: 1px solid #aaa; border-radius: 2px; }

/* contents panel */
.side { flex: 1; min-width: 0; display: flex; flex-direction: column; background: #363636; color: #aaa; }
.sidetabs { display: flex; gap: 32px; height: 65px; padding: 0 24px; border-bottom: 1px solid #1a1a1a; font-size: 15px; }
.sidetabs button { border-bottom: 4px solid transparent; border-top: 4px solid transparent; }
.sidetabs .on { border-bottom-color: #ff6a1b; color: #fff; font-weight: 700; }
.scroll { flex: 1; min-height: 0; display: flex; overflow: hidden; }
.toc { flex: 1; min-width: 0; }
.clips { margin-top: -4px; background: linear-gradient(#363636, #363636) 30px 0 / 4px 400px no-repeat #222; font-size: 13px; }
.clips li { display: flex; align-items: center; height: 42px; padding: 0 24px 0 27px; }
.clips svg { width: 10px; height: 10px; margin-right: 27px; }
.clips a { flex: 1; white-space: nowrap; }
.clips .current { color: #ff6a1b; }
.module { display: flex; align-items: center; padding: 15px 23px 16px 20px; border-top: 1px solid #1a1a1a; }
.module > div { width: 170px; margin-right: auto; }
.module.last { padding-bottom: 32px; }
.num { width: 24px; height: 24px; margin-right: 20px; border-radius: 50%; background: #222; color: #fff; text-align: center; line-height: 24px; font-size: 11px; font-weight: 600; }
.module h4 { line-height: 21px; font-size: 15px; font-weight: 600; color: #fff; }
.module p { display: flex; align-items: center; gap: 6px; line-height: 16px; font-size: 11px; font-weight: 500; }
.module p svg { width: 10px; height: 10px; }
.module button svg { width: 10px; height: 8px; }
.module.last { align-items: flex-start; }
.module.last .num { margin-top: 18px; }
.module.last button { margin-top: 26px; }
.bar { width: 17px; display: flex; flex-direction: column; align-items: center; padding: 7px 0; background: #f1f1f1; }
.track { flex: 1; width: 13px; padding-top: 136px; }
.thumb { height: 305px; background: #c1c1c1; }

/* taskbar */
.taskbar { flex: none; display: flex; align-items: center; height: 40px; background: #02050b; color: #fff; font-family: "Noto Sans", sans-serif; font-size: 12px; }
.cell { width: 48px; height: 40px; flex: none; }
.search { display: flex; align-items: center; width: 344px; height: 40px; padding: 0 14px 0 9px; background: #333; }
.search input { flex: 1; min-width: 0; margin-left: 9px; padding: 0; border: 0; outline: 0; background: none; color: #aaa; font: 14px "Noto Sans", sans-serif; }
.search input::placeholder { color: #aaa; }
.pinned { display: flex; gap: 1px; margin-left: 3px; }
.run { background: linear-gradient(#76b9ed, #76b9ed) center bottom / 40px 2px no-repeat; }
.run.active { background-color: #35373b; background-size: 48px 2px; }
.tray { display: flex; align-items: center; gap: 8px; margin-left: auto; padding-right: 25px; }
.clock { display: flex; flex-direction: column; align-items: center; width: 56px; margin: 0 10px 0 -2px; line-height: 18px; font-family: Roboto, "Noto Sans", sans-serif; }
```
